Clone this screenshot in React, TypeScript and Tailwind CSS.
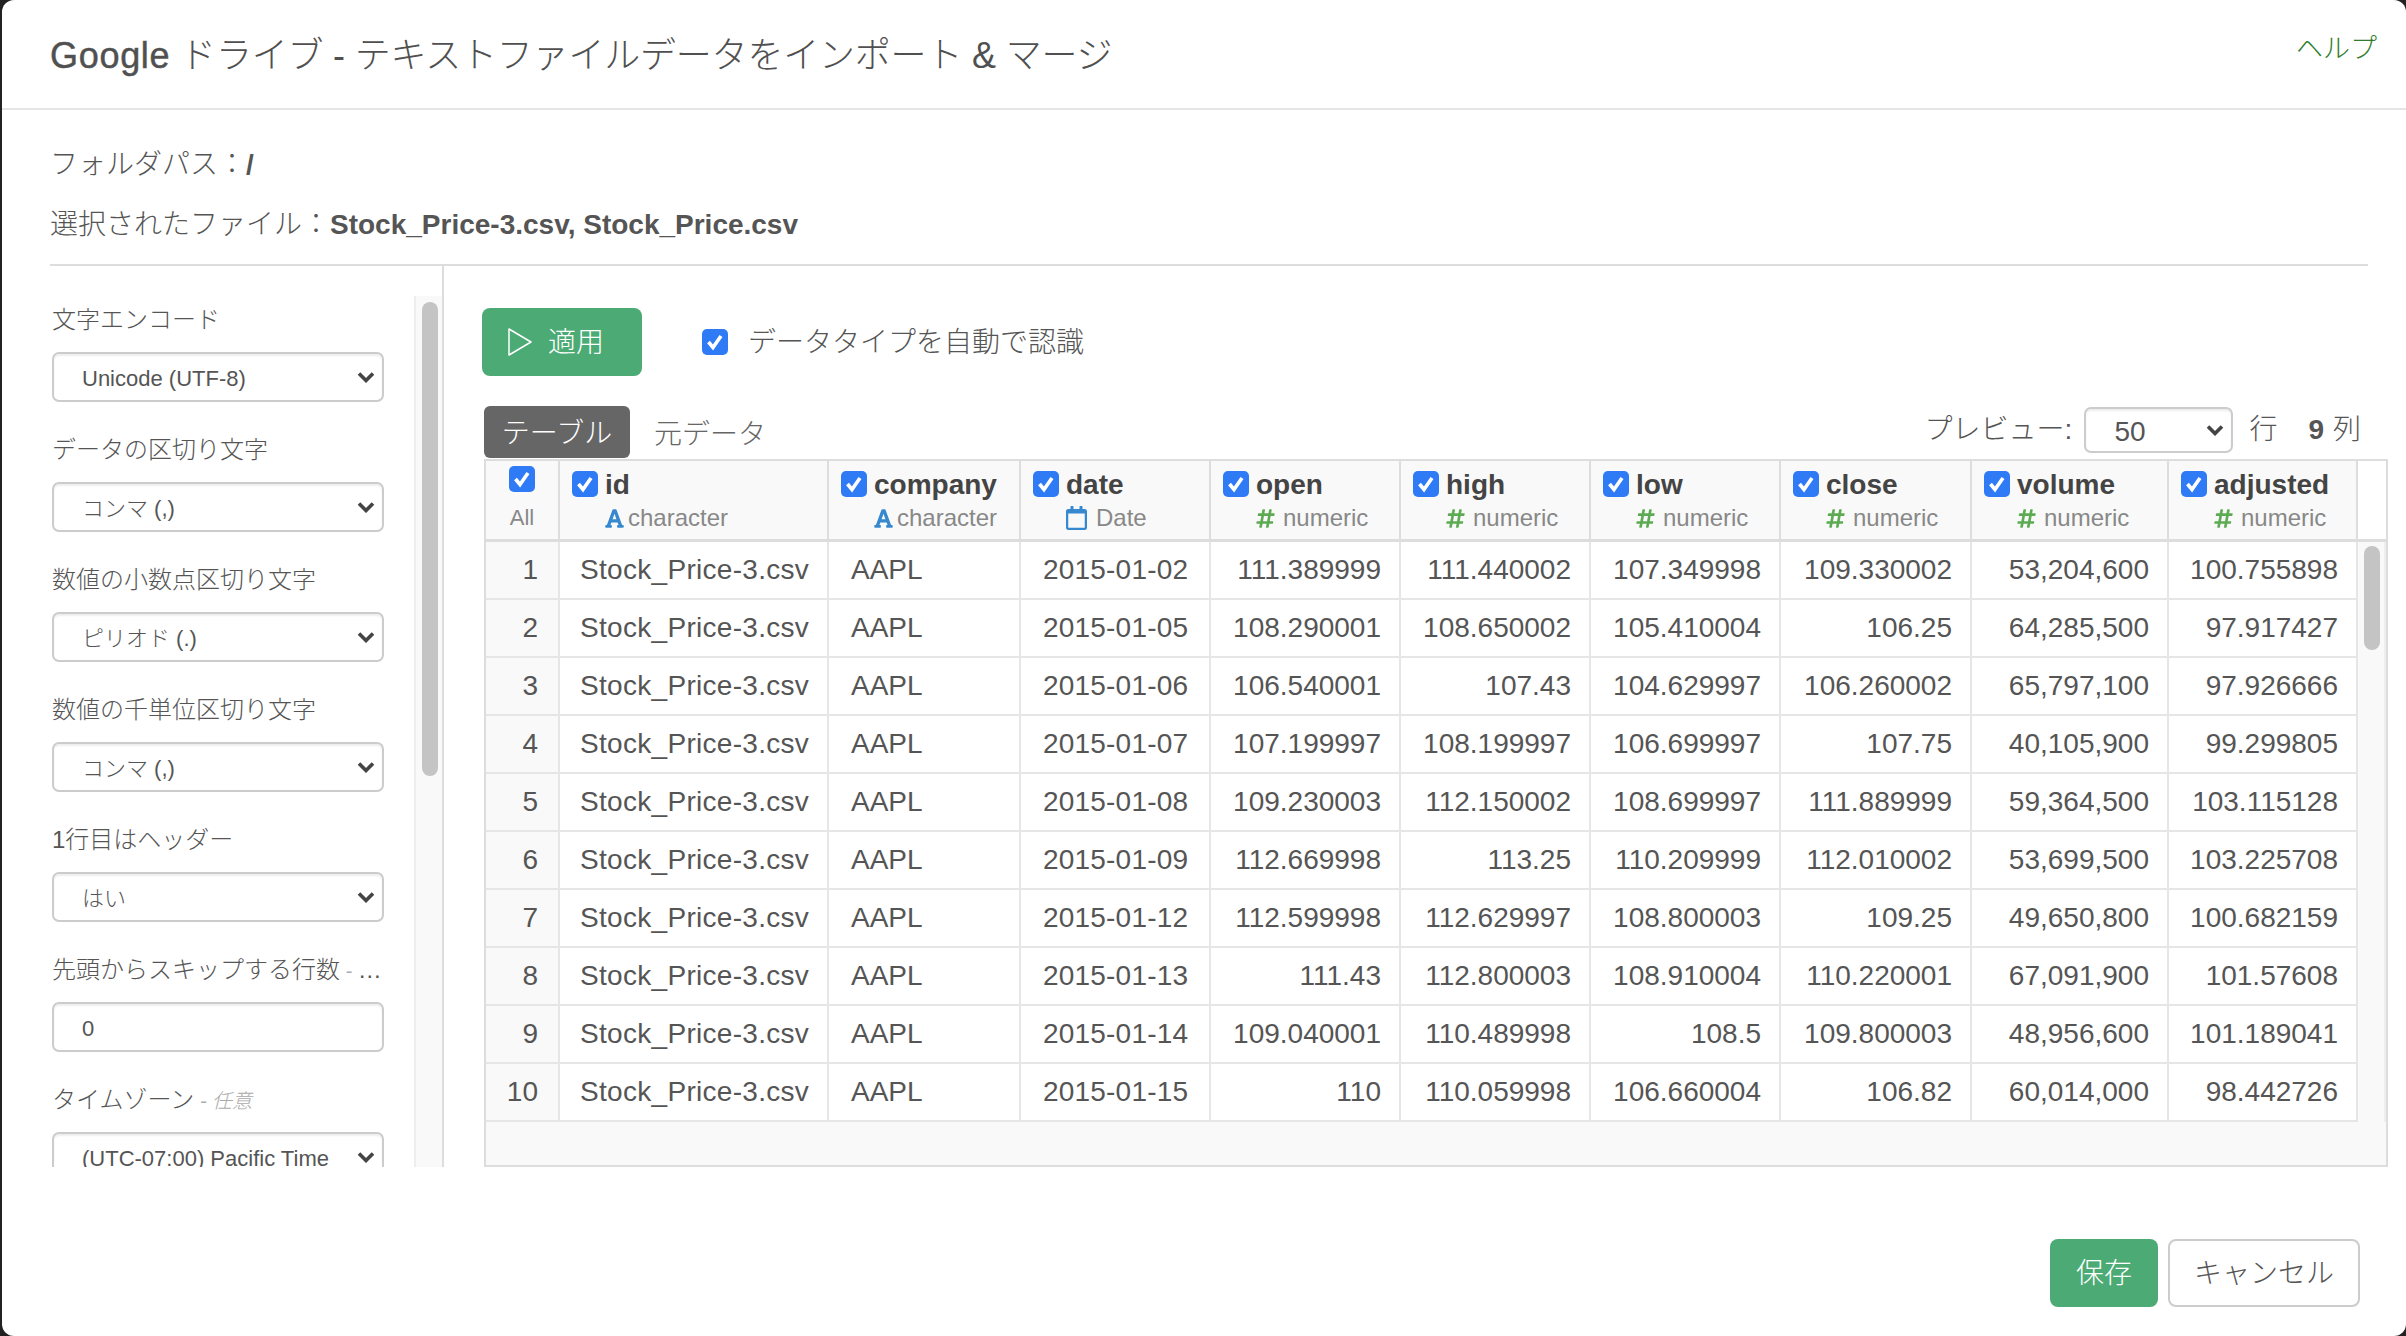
import React from "react";
import { FaFont, FaHashtag, FaRegCalendar } from "react-icons/fa";

type ColType = "character" | "Date" | "numeric";

const columns: { name: string; type: ColType }[] = [
  { name: "id", type: "character" },
  { name: "company", type: "character" },
  { name: "date", type: "Date" },
  { name: "open", type: "numeric" },
  { name: "high", type: "numeric" },
  { name: "low", type: "numeric" },
  { name: "close", type: "numeric" },
  { name: "volume", type: "numeric" },
  { name: "adjusted", type: "numeric" },
];

const rows: string[][] = [
  ["2015-01-02", "111.389999", "111.440002", "107.349998", "109.330002", "53,204,600", "100.755898"],
  ["2015-01-05", "108.290001", "108.650002", "105.410004", "106.25", "64,285,500", "97.917427"],
  ["2015-01-06", "106.540001", "107.43", "104.629997", "106.260002", "65,797,100", "97.926666"],
  ["2015-01-07", "107.199997", "108.199997", "106.699997", "107.75", "40,105,900", "99.299805"],
  ["2015-01-08", "109.230003", "112.150002", "108.699997", "111.889999", "59,364,500", "103.115128"],
  ["2015-01-09", "112.669998", "113.25", "110.209999", "112.010002", "53,699,500", "103.225708"],
  ["2015-01-12", "112.599998", "112.629997", "108.800003", "109.25", "49,650,800", "100.682159"],
  ["2015-01-13", "111.43", "112.800003", "108.910004", "110.220001", "67,091,900", "101.57608"],
  ["2015-01-14", "109.040001", "110.489998", "108.5", "109.800003", "48,956,600", "101.189041"],
  ["2015-01-15", "110", "110.059998", "106.660004", "106.82", "60,014,000", "98.442726"],
];

const GRID =
  "grid grid-cols-[74px_269px_192px_190px_190px_190px_190px_191px_197px_189px]";

function Check({ className = "" }: { className?: string }) {
  return (
    <span
      className={`flex h-[26px] w-[26px] shrink-0 items-center justify-center rounded-[5px] bg-[#2f7bf5] ${className}`}
    >
      <svg viewBox="0 0 26 26" className="h-[26px] w-[26px]">
        <path
          d="M6.5 13 L11 18.5 L19 7"
          fill="none"
          stroke="#fff"
          strokeWidth="3.6"
          strokeLinejoin="miter"
        />
      </svg>
    </span>
  );
}

function Chevron() {
  return (
    <svg
      viewBox="0 0 18 12"
      className="pointer-events-none absolute right-[9px] top-[19px] h-[12px] w-[18px]"
    >
      <path d="M2 2.5 L9 9.5 L16 2.5" fill="none" stroke="#444" strokeWidth="3.6" />
    </svg>
  );
}

function Select({ value, className = "" }: { value: string; className?: string }) {
  return (
    <div className={`relative h-[50px] w-[332px] shrink-0 ${className}`}>
      <select
        defaultValue={value}
        className="h-full w-full appearance-none rounded-[7px] border-2 border-[#ccc] bg-white pl-[28px] pt-[2px] text-[22px] font-light text-[#555] shadow-[inset_0_2px_2px_rgba(0,0,0,0.07)]"
      >
        <option>{value}</option>
      </select>
      <Chevron />
    </div>
  );
}

function Field({
  label,
  hint,
  children,
}: {
  label: string;
  hint?: boolean;
  children: React.ReactNode;
}) {
  return (
    <div className="mb-[24px]">
      <div className="mb-[12px] h-[44px] w-[332px] truncate text-[24px] leading-[47px] text-[#555]">
        {label}
        {hint && <span className="text-[20px] italic text-[#aaa]"> - 任意</span>}
      </div>
      {children}
    </div>
  );
}

function TypeIcon({ type }: { type: ColType }) {
  if (type === "character")
    return <FaFont className="mr-[4px] h-[21px] w-[19px] text-[#3688cf]" />;
  if (type === "Date")
    return <FaRegCalendar className="mr-[9px] h-[24px] w-[21px] text-[#3688cf]" />;
  return <FaHashtag className="mr-[8px] h-[21px] w-[19px] text-[#5cab52]" />;
}

export default function App() {
  return (
    <div className="h-[1336px] w-[2406px] overflow-hidden bg-[#222] pl-[2px] font-['Liberation_Sans','Noto_Sans_CJK_JP',sans-serif] font-light text-[#555]">
      <div className="flex h-[1336px] w-[2404px] flex-col rounded-[12px] bg-white">
        {/* Header */}
        <header className="flex h-[110px] shrink-0 items-center justify-between border-b-2 border-[#e5e5e5] pl-[48px] pr-[27px]">
          <h1 className="mt-[3px] text-[36px] font-light leading-[44px] tracking-[-0.2px] text-[#505050]">
            <span className="tracking-[0.7px] [-webkit-text-stroke:0.5px_#555]">Google</span> ドライブ - テキストファイルデータをインポート &amp; マージ
          </h1>
          <a className="mb-[9px] mr-[2px] text-[27px] text-[#2f7d2c]">ヘルプ</a>
        </header>

        {/* File info */}
        <div className="ml-[48px] mr-[38px] shrink-0 border-b-2 border-[#ddd] pb-[9px] pt-[25px] text-[28px] text-[#555]">
          <div className="h-[60px] leading-[60px]">
            フォルダパス：<b className="font-bold">/</b>
          </div>
          <div className="h-[60px] leading-[60px]">
            選択されたファイル：<b className="font-bold">Stock_Price-3.csv, Stock_Price.csv</b>
          </div>
        </div>

        {/* Body */}
        <div className="flex h-[901px] shrink-0">
          {/* Sidebar */}
          <aside className="flex h-full w-[442px] shrink-0 border-r-2 border-[#ddd] pt-[30px]">
            <div className="w-[412px] overflow-hidden pl-[50px]">
              <Field label="文字エンコード">
                <Select value="Unicode (UTF-8)" />
              </Field>
              <Field label="データの区切り文字">
                <Select value="コンマ (,)" />
              </Field>
              <Field label="数値の小数点区切り文字">
                <Select value="ピリオド (.)" />
              </Field>
              <Field label="数値の千単位区切り文字">
                <Select value="コンマ (,)" />
              </Field>
              <Field label="1行目はヘッダー">
                <Select value="はい" />
              </Field>
              <Field label="先頭からスキップする行数" hint>
                <input
                  defaultValue="0"
                  className="h-[50px] w-[332px] rounded-[7px] border-2 border-[#ccc] bg-white pl-[28px] pt-[3px] text-[22px] font-light text-[#555] shadow-[inset_0_2px_2px_rgba(0,0,0,0.07)]"
                />
              </Field>
              <Field label="タイムゾーン" hint>
                <Select value="(UTC-07:00) Pacific Time" />
              </Field>
            </div>
            <div className="w-[28px] shrink-0 border-l-2 border-[#eee] bg-[#f9f9f9] pl-[6px] pt-[6px]">
              <div className="h-[474px] w-[16px] rounded-full bg-[#c4c4c4]" />
            </div>
          </aside>

          {/* Main */}
          <main className="ml-[40px] flex h-full w-[1904px] flex-col pt-[42px]">
            <div className="flex h-[68px] shrink-0 items-center">
              <button className="-ml-[2px] flex h-[68px] w-[160px] items-center gap-[16px] rounded-[8px] bg-[#4caa74] pl-[26px] pt-[2px] text-[28px] font-light text-white">
                <svg viewBox="0 0 24 28" className="-mt-[2px] h-[28px] w-[24px]">
                  <path d="M1 1 L23 14 L1 27 Z" fill="none" stroke="#fff" strokeWidth="1.5" strokeLinejoin="round" />
                </svg>
                適用
              </button>
              <Check className="ml-[60px]" />
              <span className="ml-[20px] pt-[2px] text-[28px] text-[#555]">データタイプを自動で認識</span>
            </div>

            <div className="mt-[30px] flex h-[53px] shrink-0 items-start">
              <div className="flex h-[52px] w-[146px] items-center justify-center rounded-[6px] bg-[#666] pt-[3px] text-[28px] text-white">
                テーブル
              </div>
              <div className="ml-[24px] flex h-[54px] items-center pt-[3px] text-[28px] text-[#666]">元データ</div>
              <div className="ml-auto flex h-[48px] items-center pr-[27px] text-[28px] text-[#555]">
                プレビュー:
                <div className="relative ml-[12px] h-[46px] w-[149px]">
                  <select
                    defaultValue="50"
                    className="h-full w-full appearance-none rounded-[7px] border-2 border-[#ccc] bg-white pl-[28px] pt-[2px] text-[28px] font-light text-[#555] shadow-[inset_0_2px_2px_rgba(0,0,0,0.07)]"
                  >
                    <option>50</option>
                  </select>
                  <svg viewBox="0 0 18 12" className="pointer-events-none absolute right-[9px] top-[17px] h-[12px] w-[18px]">
                    <path d="M2 2.5 L9 9.5 L16 2.5" fill="none" stroke="#444" strokeWidth="3.6" />
                  </svg>
                </div>
                <span className="ml-[16px]">行</span>
                <b className="ml-[31px] font-bold">9</b>
                <span className="ml-[9px]">列</span>
              </div>
            </div>

            {/* Table */}
            <div className="flex h-[708px] w-[1904px] shrink-0 flex-col border-2 border-[#ddd] bg-[#f9f9f9]">
              {/* Head */}
              <div className="flex h-[81px] shrink-0 border-b-[3px] border-[#ddd] bg-white">
                <div className={`${GRID} h-full bg-[#f9f9f9]`}>
                  <div className="flex flex-col items-center border-r-2 border-[#ddd] pt-[5px]">
                    <Check />
                    <span className="mt-[11px] text-[22px] leading-[30px] text-[#888]">All</span>
                  </div>
                  {columns.map((c) => (
                    <div key={c.name} className="border-r-2 border-[#ddd] pl-[12px] pt-[10px]">
                      <div className="flex h-[26px] items-center gap-[7px]">
                        <Check />
                        <span className="pt-[1px] text-[28px] font-bold text-[#444]">{c.name}</span>
                      </div>
                      <div className="mt-[5px] flex h-[32px] items-center pl-[33px] text-[24px] text-[#888]">
                        <TypeIcon type={c.type} />
                        {c.type}
                      </div>
                    </div>
                  ))}
                </div>
              </div>

              {/* Rows */}
              <div className="flex shrink-0 bg-white">
                <div className="w-[1872px]">
                  {rows.map((r, i) => (
                    <div key={i} className={`${GRID} h-[58px] border-b-2 border-[#e6e6e6] text-[28px] leading-[56px] text-[#555]`}>
                      <div className="border-r-2 border-[#e6e6e6] bg-[#f9f9f9] pr-[20px] text-right">{i + 1}</div>
                      <div className="border-r-2 border-[#e6e6e6] pl-[20px] tracking-[0.3px]">Stock_Price-3.csv</div>
                      <div className="border-r-2 border-[#e6e6e6] pl-[22px]">AAPL</div>
                      {r.map((v, j) => (
                        <div
                          key={j}
                          className={`border-r-2 border-[#e6e6e6] ${j === 0 ? "pl-[22px] tracking-[0.2px]" : "pr-[18px] text-right"}`}
                        >
                          {v}
                        </div>
                      ))}
                    </div>
                  ))}
                </div>
                <div className="w-[28px] shrink-0 border-r-2 border-[#eee] bg-[#f9f9f9] pl-[6px] pt-[4px]">
                  <div className="h-[104px] w-[16px] rounded-full bg-[#c4c4c4]" />
                </div>
              </div>
            </div>
          </main>
        </div>

        {/* Footer */}
        <footer className="flex flex-1 items-start justify-end gap-[10px] pr-[46px] pt-[72px] text-[28px]">
          <button className="h-[68px] w-[108px] rounded-[8px] bg-[#4caa74] pt-[2px] font-light text-white">保存</button>
          <button className="h-[68px] w-[192px] rounded-[8px] border-2 border-[#ccc] bg-white pt-[2px] font-light text-[#555]">キャンセル</button>
        </footer>
      </div>
    </div>
  );
}
